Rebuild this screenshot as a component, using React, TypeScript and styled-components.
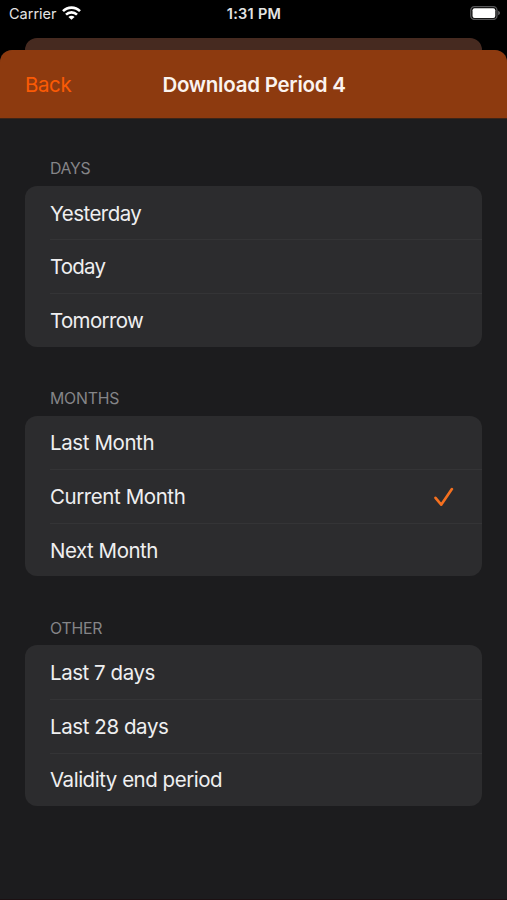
import React from 'react';
import styled, { createGlobalStyle } from 'styled-components';

const GlobalStyle = createGlobalStyle`
  * { box-sizing: border-box; }
  body {
    margin: 0;
    background: #000;
    font-family: Inter, "Liberation Sans", sans-serif;
  }
`;

const Screen = styled.div`
  width: 507px;
  height: 900px;
  display: flex;
  flex-direction: column;
  overflow: hidden;
  background: #000;
`;

const StatusBar = styled.header`
  height: 38px;
  padding: 0 8px 10px 9px;
  display: grid;
  grid-template-columns: 1fr auto 1fr;
  align-items: center;
  color: #e4e4e4;
  font-size: 14.5px;
  line-height: 20px;
`;

const Carrier = styled.div`
  display: flex;
  align-items: center;
  gap: 5px;
`;

const Time = styled.time`
  font-weight: 600;
  letter-spacing: 0.28px;
`;

const WifiIcon = styled.svg`
  margin-top: -2px;
`;

const BatteryIcon = styled.svg`
  justify-self: end;
  margin: -2px -9px 0 0;
`;

const BackCard = styled.div`
  flex: none;
  height: 12px;
  margin: 0 25px;
  border-radius: 12px 12px 0 0;
  background: #462a20;
`;

const Sheet = styled.main`
  flex: 1;
  border-radius: 12px 12px 0 0;
  overflow: hidden;
  background: #1c1c1e;
  border-bottom: 1px solid #1c1012;
`;

const NavBar = styled.nav`
  height: 69px;
  padding: 0 25px;
  display: grid;
  grid-template-columns: 1fr auto 1fr;
  align-items: center;
  background: #8d3a0f;
  border-bottom: 1px solid #3c2418;
`;

const BackButton = styled.button`
  justify-self: start;
  padding: 1px 0 0;
  border: 0;
  background: none;
  color: #fb5a05;
  font: 400 20.5px/26px Inter, sans-serif;
  letter-spacing: -0.4px;
`;

const Title = styled.h1`
  margin: 0;
  padding: 1px 0 0 1px;
  color: #fbf3ef;
  font-size: 20.5px;
  line-height: 26px;
  font-weight: 600;
  letter-spacing: -0.25px;
`;

const Group = styled.section`
  height: 229.8px;
  padding: 0 25px;
  &:first-of-type { margin-top: 37px; }
`;

const GroupLabel = styled.h2<{ $spacing: number }>`
  margin: 0;
  padding: 3px 0 0 25px;
  height: 29.8px;
  color: #858588;
  font-size: 15.8px;
  line-height: 20px;
  font-weight: 400;
  letter-spacing: ${({ $spacing }) => $spacing}px;
`;

const List = styled.ul`
  margin: 0;
  padding: 0 0 0 25px;
  list-style: none;
  border-radius: 12px;
  background: #2c2c2e;
`;

const Row = styled.li<{ $spacing: number }>`
  height: 53.6px;
  padding: 2px 28px 0 0;
  display: flex;
  align-items: center;
  justify-content: space-between;
  color: #efeff0;
  font-size: 20.5px;
  line-height: 26px;
  letter-spacing: ${({ $spacing }) => $spacing}px;
  & + & {
    padding-top: 1px;
    border-top: 1px solid #343436;
  }
`;

type Item = { label: string; spacing: number; selected?: boolean };

const groups: { name: string; spacing: number; items: Item[] }[] = [
  {
    name: 'DAYS',
    spacing: -0.3,
    items: [
      { label: 'Yesterday', spacing: -0.55 },
      { label: 'Today', spacing: -0.8 },
      { label: 'Tomorrow', spacing: -0.65 },
    ],
  },
  {
    name: 'MONTHS',
    spacing: -0.2,
    items: [
      { label: 'Last Month', spacing: -0.4 },
      { label: 'Current Month', spacing: -0.42, selected: true },
      { label: 'Next Month', spacing: -0.48 },
    ],
  },
  {
    name: 'OTHER',
    spacing: -0.2,
    items: [
      { label: 'Last 7 days', spacing: -0.46 },
      { label: 'Last 28 days', spacing: -0.42 },
      { label: 'Validity end period', spacing: -0.48 },
    ],
  },
];

const Wifi = () => (
  <WifiIcon width="19" height="14" viewBox="0 0 19 14" fill="none" stroke="#fff" strokeWidth="2.6">
    <path d="M1 5.2C5.8.4 13.2.4 18 5.2" />
    <path d="M4 8.6c3.1-3 7.9-3 11 0" />
    <path d="M9.5 13.8 6.4 10.9c1.8-1.6 4.4-1.6 6.2 0Z" fill="#fff" stroke="none" />
  </WifiIcon>
);

const Battery = () => (
  <BatteryIcon width="38" height="14" viewBox="0 0 38 14">
    <rect x="0.75" y="0.65" width="26.2" height="12.8" rx="3.6" fill="none" stroke="#58585a" strokeWidth="1.3" />
    <rect x="2.5" y="2.3" width="22.8" height="9.6" rx="2" fill="#fff" />
    <path d="M28.2 4.8c2.3.8 2.3 3.7 0 4.5Z" fill="#68686a" />
  </BatteryIcon>
);

const Check = () => (
  <svg width="20" height="20" viewBox="0 0 20 20" fill="none" stroke="#f5701f" strokeWidth="2.6" strokeLinecap="round" strokeLinejoin="round">
    <path d="M1.5 10.8 7.2 17.7 17.9 2" />
  </svg>
);

export default function App() {
  return (
    <>
      <GlobalStyle />
      <Screen>
        <StatusBar>
          <Carrier>Carrier <Wifi /></Carrier>
          <Time>1:31 PM</Time>
          <Battery />
        </StatusBar>
        <BackCard />
        <Sheet>
          <NavBar>
            <BackButton>Back</BackButton>
            <Title>Download Period 4</Title>
          </NavBar>
          {groups.map((group) => (
            <Group key={group.name}>
              <GroupLabel $spacing={group.spacing}>{group.name}</GroupLabel>
              <List>
                {group.items.map((item) => (
                  <Row key={item.label} $spacing={item.spacing}>
                    {item.label}
                    {item.selected && <Check />}
                  </Row>
                ))}
              </List>
            </Group>
          ))}
        </Sheet>
      </Screen>
    </>
  );
}
